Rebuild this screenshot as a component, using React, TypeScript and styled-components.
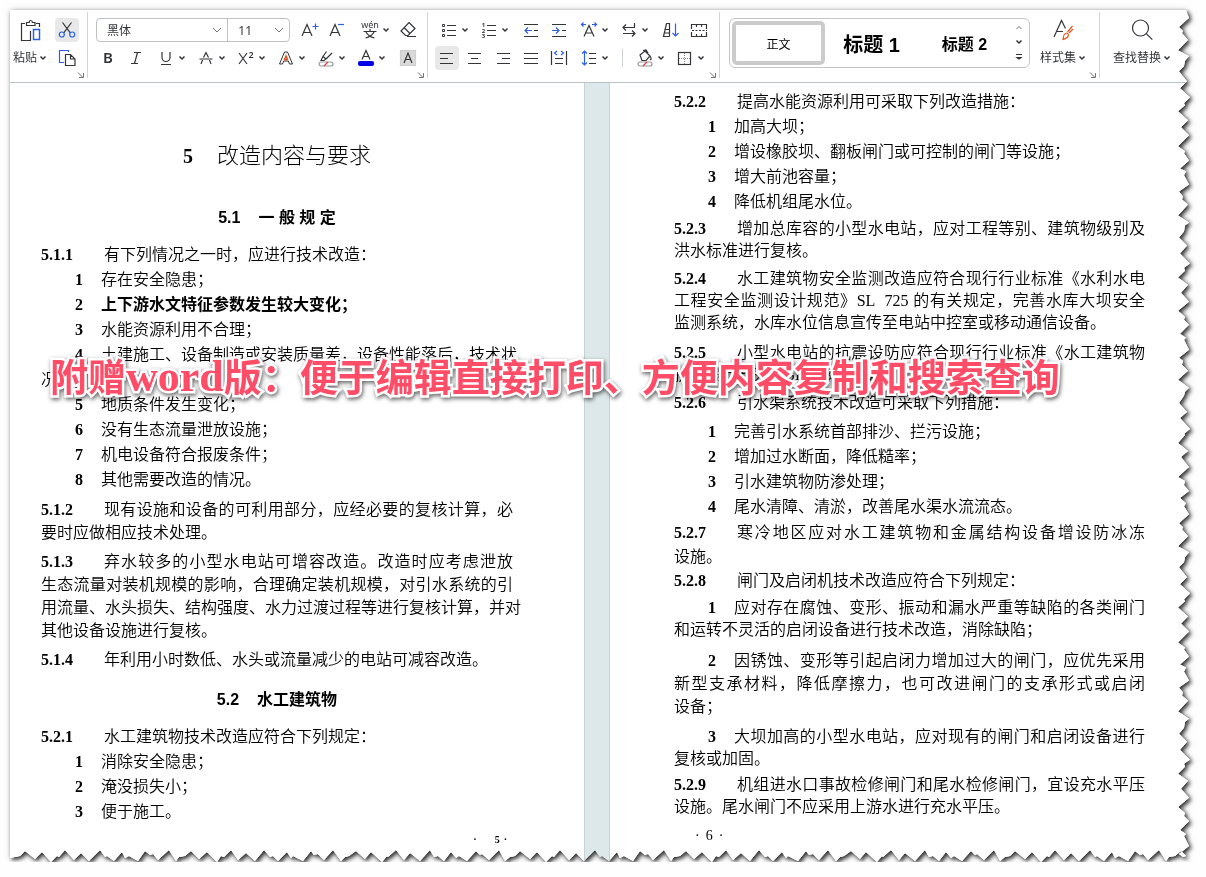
import React, { ReactNode } from "react";
import styled, { createGlobalStyle } from "styled-components";

const INK = "#333538";
const BLUE = "#2a5fe6";
const UI_FONT = '"Noto Sans", "Noto Sans CJK SC", sans-serif';
const BODY_FONT = '"Liberation Serif", "Noto Sans CJK SC", serif';

const GlobalStyle = createGlobalStyle`
  * { box-sizing: border-box; }
  body { margin: 0; background: #fefefe; color: #000; font-family: ${UI_FONT}; }
  button, select { font: inherit; color: inherit; }
`;

/* ---------- torn paper outline ---------- */

const TEETH: [number, number][] = [
  [9, 1], [8, 11], [4, 7], [3, 8], [6, 2], [10, 12], [7, 1], [4, 5], [5, 6], [6, 11],
  [9, 3], [7, 10], [10, 0], [5, 6], [2, 5], [7, 12], [8, 2], [7, 9], [9, 1], [10, 12],
  [5, 5], [3, 6], [6, 1], [8, 10], [4, 4], [3, 6],
];

function tornEdge(total: number, shift: number) {
  const points: [number, number][] = [];
  let at = 0;
  for (let i = shift; at < total; i++) {
    const [step, depth] = TEETH[i % TEETH.length];
    at += step + ((i * 5) % 3) - 1;
    points.push([Math.min(100, (at / total) * 100), depth]);
  }
  return points;
}

const rightEdge = tornEdge(850, 0)
  .slice(0, -2)
  .map(([p, d]) => `calc(100% - ${d}px) ${p.toFixed(2)}%`);
const bottomEdge = tornEdge(1180, 7)
  .slice(0, -1)
  .reverse()
  .map(([p, d]) => `${p.toFixed(2)}% calc(100% - ${d}px)`);
const TORN_CLIP = `polygon(0 0, calc(100% - 4px) 0, ${rightEdge.join(", ")}, calc(100% - 4px) calc(100% - 6px), ${bottomEdge.join(", ")}, 0 calc(100% - 4px))`;

const Sheet = styled.main`
  position: relative;
  margin: 10px 16px 0 10px;
  filter: drop-shadow(2px 2px 2px rgba(0, 0, 0, 0.8)) drop-shadow(0 0 3px rgba(0, 0, 0, 0.18));
`;
const Torn = styled.div`
  background: #fff;
  clip-path: ${TORN_CLIP};
`;

/* ---------- ribbon ---------- */

const Ribbon = styled.header`
  display: flex;
  height: 73px;
  border-bottom: 1px solid #b7c3c5;
  background: #fff;
  overflow: hidden;
  color: ${INK};
`;
const Group = styled.div<{ $pad: string }>`
  position: relative;
  display: flex;
  flex: none;
  padding: ${(p) => p.$pad};
  &::after {
    content: "";
    position: absolute;
    right: 0;
    top: 2px;
    height: 66px;
    border-right: 1px solid #d2d5d7;
  }
`;
const Rows = styled.div`
  display: flex;
  flex-direction: column;
  gap: 4px;
`;
const Row = styled.div`
  display: flex;
  gap: 4px;
  height: 24px;
`;
const Cluster = styled.div`
  display: flex;
`;
const Tool = styled.button<{ $on?: boolean; $menu?: boolean }>`
  display: flex;
  align-items: center;
  justify-content: ${(p) => (p.$menu ? "flex-start" : "center")};
  width: ${(p) => (p.$menu ? 40 : p.$on ? 24 : 28)}px;
  height: 24px;
  margin: 0 ${(p) => (p.$on ? 2 : 0)}px;
  padding: ${(p) => (p.$menu ? "0 0 0 4px" : "0")};
  border: 0;
  border-radius: 4px;
  background: ${(p) => (p.$on ? "#e8e8e8" : "transparent")};
`;
const Launcher = styled.button`
  position: absolute;
  right: 3px;
  bottom: 3px;
  width: 8px;
  height: 8px;
  padding: 0;
  border: 0;
  background: none;
  display: flex;
`;
const PasteColumn = styled.div`
  display: flex;
  flex-direction: column;
  width: 40px;
  gap: 4px;
`;
const PasteButton = styled(Tool)`
  width: 36px;
`;
const CaptionButton = styled.button`
  display: flex;
  align-items: center;
  gap: 2px;
  height: 24px;
  padding: 0;
  border: 0;
  background: none;
  font-size: 12px;
  line-height: 20px;
  white-space: nowrap;
`;
const Combos = styled.div`
  display: flex;
  width: 194px;
  height: 24px;
  margin-left: 2px;
  border: 1px solid #bfc2c4;
  border-radius: 4px;
`;
const Combo = styled.label<{ $w: number; $line?: boolean }>`
  display: flex;
  align-items: center;
  width: ${(p) => p.$w}px;
  padding-right: 5px;
  border-left: ${(p) => (p.$line ? "1px solid #bfc2c4" : "0")};
  select {
    flex: 1;
    min-width: 0;
    padding: 0 0 0 10px;
    border: 0;
    background: none;
    appearance: none;
    font-size: 12px;
  }
`;
const Divider = styled.span`
  width: 1px;
  height: 18px;
  margin: 3px 6px 0 9px;
  background: #cfd2d4;
`;
const Gallery = styled.div`
  display: flex;
  width: 301px;
  height: 50px;
  padding: 2px;
  border: 1px solid #c3c6c8;
  border-radius: 6px;
`;
const StyleTile = styled.button<{ $size: number; $bold?: boolean; $on?: boolean }>`
  flex: 1;
  height: 44px;
  padding: 0;
  border: 4px solid ${(p) => (p.$on ? "#cbcbcb" : "transparent")};
  border-radius: 5px;
  background: none;
  color: #000;
  font-family: "Liberation Sans", "Noto Sans CJK SC", sans-serif;
  font-size: ${(p) => p.$size}px;
  font-weight: ${(p) => (p.$bold ? 700 : 400)};
  white-space: nowrap;
`;
const Scroller = styled.div`
  display: flex;
  flex-direction: column;
  justify-content: space-around;
  align-items: center;
  width: 16px;
  button { padding: 0; border: 0; background: none; display: flex; }
`;
const BigTool = styled.div`
  display: flex;
  flex-direction: column;
  align-items: center;
  gap: 4px;
`;
const StyleSetTool = styled(BigTool)`
  padding-left: 10px;
`;
const SearchTool = styled(BigTool)`
  flex: none;
  padding: 8px 0 0 13px;
`;

const Svg = styled.svg`
  display: block;
  flex: none;
  fill: none;
  stroke: ${INK};
  stroke-width: 1.2;
  overflow: visible;
  .b { stroke: ${BLUE}; }
  .o { stroke: #e0591f; }
  text { fill: ${INK}; stroke: none; font-family: "Noto Sans", "Noto Sans CJK SC", sans-serif; text-anchor: middle; }
`;
const Icon = ({ children }: { children: ReactNode }) => (
  <Svg width="24" height="24" viewBox="0 0 24 24" aria-hidden="true">{children}</Svg>
);
const Chevron = () => (
  <Svg width="8" height="6" viewBox="0 0 8 6" aria-hidden="true"><path d="M1.5 1.5L4 4l2.5-2.5" strokeWidth="1.5" /></Svg>
);
const WideChevron = () => (
  <Svg width="10" height="8" viewBox="0 0 10 8" aria-hidden="true"><path d="M1 2l4 4 4-4" stroke="#777" strokeWidth="1" /></Svg>
);
const Corner = () => (
  <Launcher aria-label="更多设置">
    <Svg width="8" height="8" viewBox="0 0 8 8" aria-hidden="true"><path d="M1 1.5l4.5 4.5M6.500 2v4.500H2" stroke="#777" strokeWidth="1" /></Svg>
  </Launcher>
);

function T({ name, menu, on, children }: { name: string; menu?: boolean; on?: boolean; children: ReactNode }) {
  return (
    <Tool aria-label={name} $menu={menu} $on={on}>
      <Icon>{children}</Icon>
      {menu && <Chevron />}
    </Tool>
  );
}

const lines = (rows: [number, number, number][]) => <path d={rows.map(([y, a, b]) => `M${a} ${y}H${b}`).join("")} />;

function Toolbar() {
  return (
    <Ribbon>
      <Group $pad="8px 7px 0 3px">
        <PasteColumn>
          <PasteButton aria-label="粘贴板">
            <Icon>
              <path d="M6 5.500H2.500v17H12M17 5.500h3.500V9" />
              <path d="M7.500 7.500v-3h2.700c0-1.400.8-2 1.600-2s1.600.6 1.600 2H16v3z" />
              <path className="b" d="M14.500 11.500h6v10h-6z" strokeWidth="1.500" />
              <path d="M11.500 13v9.500" />
            </Icon>
          </PasteButton>
          <CaptionButton>粘贴<Chevron /></CaptionButton>
        </PasteColumn>
        <Rows>
          <Tool aria-label="剪切" $on>
            <Icon>
              <path d="M7.500 4.500l7.800 10.300M16.500 4.500L8.700 14.800" />
              <circle className="b" cx="6.800" cy="16.500" r="2.500" />
              <circle className="b" cx="17.200" cy="16.500" r="2.500" />
            </Icon>
          </Tool>
          <T name="复制">
            <path className="b" d="M9 16.500H4.500v-12h9V6" />
            <path d="M10.500 8.500h5l4.500 4.500v6.500h-9.500zM15.500 8.500V13H20" />
          </T>
        </Rows>
        <Corner />
      </Group>

      <Group $pad="8px 6px 0 6px">
        <Rows>
          <Row>
            <Combos>
              <Combo $w={131}>
                <select aria-label="字体" defaultValue="黑体"><option>黑体</option></select>
                <WideChevron />
              </Combo>
              <Combo $w={62} $line>
                <select aria-label="字号" defaultValue="11"><option>11</option></select>
                <WideChevron />
              </Combo>
            </Combos>
            <Cluster>
              <T name="增大字号">
                <path d="M6 18L11 6.500 16 18M7.600 14.500h6.800" />
                <path className="b" d="M16.500 8.500h6M19.500 5.500v6" />
              </T>
              <T name="减小字号">
                <path d="M6 18L11 6.500 16 18M7.600 14.500h6.800" />
                <path className="b" d="M14 6.500h6" />
              </T>
            </Cluster>
            <Cluster>
              <T name="拼音指南" menu>
                <text x="12" y="10" fontSize="9">wén</text>
                <path d="M5.500 13.500h13M12 11v2.500M8 14c1.500 3 4 5 8.500 6M16 14c-1.500 3-4 5-8.500 6" />
              </T>
              <T name="清除格式">
                <path d="M13 4.500l6 6-7 7H9.500L5 13zM8 9.500l6 6M11 18.500h9" />
              </T>
            </Cluster>
          </Row>
          <Row>
            <Cluster>
              <T name="加粗"><text x="12" y="17" fontSize="15" fontWeight="600">B</text></T>
              <T name="倾斜"><path d="M10 6.500h7M7 17.500h7M13.500 6.500l-3 11" /></T>
              <T name="下划线" menu><path d="M8 6v5.500a4 4 0 0 0 8 0V6M7 18.500h10" /></T>
              <T name="删除线" menu>
                <path d="M9.500 11.500L12 6.500l2.500 5M8.500 14L7 18M15.500 14l1.500 4M5.500 13h13" />
              </T>
              <T name="上标" menu>
                <path d="M5 7l8 11M13 7l-8 11" />
                <text x="17" y="12" fontSize="9" fontWeight="600">2</text>
              </T>
              <T name="文字效果" menu>
                <path d="M5.500 18L10.500 6h3l5 12h-3l-1.200-3H9.700l-1.200 3z" strokeWidth="1" />
                <path className="o" d="M12 10l-1.500 3.500h3z" strokeWidth="1.500" />
              </T>
              <T name="突出显示" menu>
                <path d="M7 14.500l2-4 3 2.500-2 1.500zM9 10.500l3.500-5M12 13l6-6" />
                <rect x="5" y="16" width="14" height="4" rx="2" stroke="#9a9a9a" />
                <path d="M10 20l4-4" stroke="#e0434b" />
              </T>
              <T name="字体颜色" menu>
                <path d="M8 13.500L12 4.500l4 9M9.400 10.500h5.200" />
                <rect x="4" y="15" width="16" height="5" rx="2" fill="#0000e6" stroke="none" />
              </T>
            </Cluster>
            <T name="字符底纹">
              <rect x="4.500" y="4.500" width="15" height="15" fill="#d9d9d9" stroke="#cfcfcf" />
              <path d="M8 17l4-10 4 10M9.300 13.500h5.400" />
            </T>
          </Row>
        </Rows>
        <Corner />
      </Group>

      <Group $pad="8px 7px 0 5px">
        <Rows>
          <Row>
            <Cluster>
              <T name="项目符号" menu>
                {lines([[7.5, 10, 19], [12.5, 10, 19], [17.5, 10, 19]])}
                <path d="M5.500 6.500h2v2h-2zM5.500 11.500h2v2h-2zM5.500 16.500h2v2h-2z" strokeWidth="1" />
              </T>
              <T name="编号" menu>
                {lines([[7.5, 10, 19], [12.5, 10, 19], [17.5, 10, 19]])}
                <text x="6.500" y="9" fontSize="6" fontWeight="700">1</text>
                <text x="6.500" y="14.500" fontSize="6" fontWeight="700">2</text>
                <text x="6.500" y="20" fontSize="6" fontWeight="700">3</text>
              </T>
            </Cluster>
            <Cluster>
              <T name="减少缩进">
                {lines([[6.5, 5, 19], [12.5, 15, 19], [18.5, 5, 19]])}
                <path className="b" d="M13 12.500H6M9 9.500l-3 3 3 3" />
              </T>
              <T name="增加缩进">
                {lines([[6.5, 5, 19], [12.5, 15, 19], [18.5, 5, 19]])}
                <path className="b" d="M5 12.500h7M9 9.500l3 3-3 3" />
              </T>
              <T name="字符缩放" menu>
                <path d="M7 18.500L12 7.500l5 11M8.600 15h6.800" />
                <path className="b" d="M4.500 6.500H9M15 6.500h4.500M6.500 4.500l-2 2 2 2M17.500 4.500l2 2-2 2" />
              </T>
              <T name="文字方向" menu>
                <path d="M17.500 5v4.500H6M9 6.500l-3 3 3 3M6 15.500h12M15 12.500l3 3-3 3" />
              </T>
            </Cluster>
            <Cluster>
              <T name="排序">
                <path d="M7.500 5.500h3v13M7.500 5.500l-3 13h6M6.500 11.500h4M5.500 15h5" />
                <path className="b" d="M16.500 5.500v12.500M13.500 15l3 3 3-3" />
              </T>
              <T name="制表位">
                <path d="M4.500 11V6.500h15V11M4.500 14v4.500h15V14M9.500 6.500V9M14.500 6.500V9M9.500 16v2.500M14.500 16v2.500" />
                <path d="M5 12.500h15" strokeDasharray="2 1.500" />
              </T>
            </Cluster>
          </Row>
          <Row>
            <Cluster>
              <T name="左对齐" on>{lines([[7.5, 5, 18], [12.5, 5, 13], [17.5, 5, 18]])}</T>
              <T name="居中">{lines([[7.5, 5, 18], [12.5, 8, 15], [17.5, 5, 18]])}</T>
              <T name="右对齐">{lines([[7.5, 6, 19], [12.5, 11, 19], [17.5, 6, 19]])}</T>
              <T name="两端对齐">{lines([[7.5, 5, 19], [12.5, 5, 19], [17.5, 5, 19]])}</T>
              <T name="分散对齐">
                {lines([[12.5, 8, 16], [17.5, 8, 16]])}
                <path d="M4.500 5v14M19.500 5v14" />
                <path className="b" d="M10 5L7.500 7l2.500 2M14 5l2.500 2-2.500 2" />
              </T>
              <T name="行距" menu>
                {lines([[7.5, 12, 19], [12.5, 12, 19], [17.5, 12, 19]])}
                <path className="b" d="M7.500 5v14M5 7.500L7.500 5 10 7.500M5 16.500L7.500 19l2.500-2.500" />
              </T>
              <Divider />
              <T name="底纹颜色" menu>
                <path d="M7 9l5-4 5 5-4 4.500H9zM10 4.500l3-.5 2 3M17 10c1.500 2 1.500 3 0 4" />
                <rect x="5" y="16" width="14" height="4" rx="2" stroke="#9a9a9a" />
                <path d="M10 20l4-4" stroke="#e0434b" />
              </T>
              <T name="边框" menu>
                <rect x="5.500" y="6.500" width="12" height="12" />
                <path d="M11.500 7v11M6 12.500h11" stroke="#888" strokeWidth="1" strokeDasharray="1 1" />
              </T>
            </Cluster>
          </Row>
        </Rows>
        <Corner />
      </Group>

      <Group $pad="8px 14px 0 9px">
        <Gallery>
          <StyleTile $size={12} $on>正文</StyleTile>
          <StyleTile $size={20} $bold>标题 1</StyleTile>
          <StyleTile $size={16} $bold>标题 2</StyleTile>
          <Scroller>
            <button aria-label="上一行"><Svg width="8" height="6" viewBox="0 0 8 6"><path d="M1.500 4L4 1.500 6.500 4" stroke="#aaa" /></Svg></button>
            <button aria-label="下一行"><Chevron /></button>
            <button aria-label="全部样式"><Svg width="8" height="8" viewBox="0 0 8 8"><path d="M1 1.500h6M2 4.500h4L4 6z" /></Svg></button>
          </Scroller>
        </Gallery>
        <StyleSetTool>
          <Icon>
            <path d="M3 19L10.500 2.500l4 8M6 13.500h6" />
            <path className="o" d="M21.500 8l-5 6M22 11l-4 4M12 21.500c.3-4 1.500-6.500 4-6.500 2.500 1 2 5-4 6.500z" />
          </Icon>
          <CaptionButton>样式集<Chevron /></CaptionButton>
        </StyleSetTool>
        <Corner />
      </Group>

      <SearchTool>
        <Icon>
          <circle cx="10.500" cy="10" r="8" />
          <path d="M16.300 15.700l6 6" />
        </Icon>
        <CaptionButton>查找替换<Chevron /></CaptionButton>
      </SearchTool>
    </Ribbon>
  );
}

/* ---------- document ---------- */

const Spread = styled.div`
  display: flex;
  background: #dce8ea;
  font-family: ${BODY_FONT};
  font-size: 16px;
`;
const Page = styled.article<{ $side: "left" | "right" }>`
  flex: 1 1 ${(p) => (p.$side === "left" ? 575 : 581)}px;
  min-width: 0;
  background: #fff;
  padding: ${(p) => (p.$side === "left" ? "57px 71px 14px 31px" : "6px 45px 12px 64px")};
  border-right: ${(p) => (p.$side === "left" ? "1px solid #c6d2d4" : "0")};
  border-left: ${(p) => (p.$side === "right" ? "1px solid #c6d2d4" : "0")};
`;
const Gutter = styled.div`
  flex: none;
  width: 24px;
`;
const Chapter = styled.h1`
  display: flex;
  justify-content: center;
  gap: 24px;
  margin: 0;
  font-size: 22px;
  line-height: 32px;
  font-weight: 300;
  b { font-weight: 700; font-size: 20px; }
`;
const Section = styled.h2<{ $top: number }>`
  display: flex;
  justify-content: center;
  gap: 18px;
  margin: ${(p) => p.$top}px 0 12px;
  font-family: "Liberation Sans", "Noto Sans CJK SC", sans-serif;
  font-size: 16px;
  line-height: 24px;
  font-weight: 700;
`;
const Para = styled.div<{ $top: number; $lh: number; $bold?: boolean }>`
  margin-top: ${(p) => p.$top}px;
  line-height: ${(p) => p.$lh}px;
  font-weight: ${(p) => (p.$bold ? 700 : 350)};
`;
const Line = styled.div<{ $indent: boolean }>`
  display: flex;
  padding-left: ${(p) => (p.$indent ? 34 : 0)}px;
  white-space: nowrap;
`;
const Num = styled.b<{ $w: number }>`
  flex: none;
  width: ${(p) => p.$w}px;
  font-weight: 700;
`;
const Words = styled.span<{ $fill: boolean }>`
  flex: 1;
  min-width: 0;
  text-align-last: ${(p) => (p.$fill ? "justify" : "left")};
`;
const Folio = styled.footer<{ $side: "left" | "right" }>`
  display: flex;
  gap: ${(p) => (p.$side === "left" ? 4 : 6)}px;
  justify-content: ${(p) => (p.$side === "left" ? "flex-end" : "flex-start")};
  margin-top: ${(p) => (p.$side === "left" ? 8 : 10)}px;
  padding: ${(p) => (p.$side === "left" ? "0 6px 0 0" : "0 0 0 21px")};
  font-size: ${(p) => (p.$side === "left" ? 10 : 14)}px;
  font-weight: ${(p) => (p.$side === "left" ? 700 : 400)};
  line-height: 16px;
  span:first-child { margin-right: ${(p) => (p.$side === "left" ? 14 : 0)}px; }
`;
const Banner = styled.p`
  position: absolute;
  left: 40px;
  top: 337px;
  margin: 0;
  white-space: nowrap;
  font-family: "Noto Sans CJK SC", sans-serif;
  font-size: 38px;
  line-height: 56px;
  font-weight: 700;
  color: #ff4d68;
  -webkit-text-stroke: 5px #fff;
  paint-order: stroke fill;
  filter: drop-shadow(1px 2px 2px rgba(0, 0, 0, 0.6));
  span { font-family: "Liberation Serif", serif; font-size: 44px; }
`;

interface Block { n: string; t: string[]; top?: number; lh?: number; bold?: boolean }

function Blocks({ items }: { items: Block[] }) {
  return (
    <>
      {items.map((b, k) => {
        const clause = b.n.includes(".");
        return (
          <Para key={k} $top={b.top ?? 0} $lh={b.lh ?? 25} $bold={b.bold}>
            {b.t.map((text, i) => (
              <Line key={i} $indent={!clause && i === 0}>
                {i === 0 && <Num $w={clause ? 63 : 26}>{b.n}</Num>}
                <Words $fill={i < b.t.length - 1}>{text}</Words>
              </Line>
            ))}
          </Para>
        );
      })}
    </>
  );
}

const general: Block[] = [
  { n: "5.1.1", t: ["有下列情况之一时，应进行技术改造："] },
  { n: "1", t: ["存在安全隐患；"] },
  { n: "2", t: ["上下游水文特征参数发生较大变化；"], bold: true },
  { n: "3", t: ["水能资源利用不合理；"] },
  { n: "4", t: ["土建施工、设备制造或安装质量差，设备性能落后，技术状", "况差；"] },
  { n: "5", t: ["地质条件发生变化；"] },
  { n: "6", t: ["没有生态流量泄放设施；"] },
  { n: "7", t: ["机电设备符合报废条件；"] },
  { n: "8", t: ["其他需要改造的情况。"] },
  { n: "5.1.2", t: ["现有设施和设备的可利用部分，应经必要的复核计算，必", "要时应做相应技术处理。"], top: 6, lh: 23 },
  {
    n: "5.1.3",
    t: ["弃水较多的小型水电站可增容改造。改造时应考虑泄放", "生态流量对装机规模的影响，合理确定装机规模，对引水系统的引", "用流量、水头损失、结构强度、水力过渡过程等进行复核计算，并对", "其他设备设施进行复核。"],
    top: 6,
    lh: 23,
  },
  { n: "5.1.4", t: ["年利用小时数低、水头或流量减少的电站可减容改造。"], top: 6, lh: 23 },
];
const hydraulic: Block[] = [
  { n: "5.2.1", t: ["水工建筑物技术改造应符合下列规定："] },
  { n: "1", t: ["消除安全隐患；"] },
  { n: "2", t: ["淹没损失小；"] },
  { n: "3", t: ["便于施工。"] },
];
const facing: Block[] = [
  { n: "5.2.2", t: ["提高水能资源利用可采取下列改造措施："] },
  { n: "1", t: ["加高大坝；"] },
  { n: "2", t: ["增设橡胶坝、翻板闸门或可控制的闸门等设施；"] },
  { n: "3", t: ["增大前池容量；"] },
  { n: "4", t: ["降低机组尾水位。"] },
  { n: "5.2.3", t: ["增加总库容的小型水电站，应对工程等别、建筑物级别及", "洪水标准进行复核。"], top: 4, lh: 22 },
  {
    n: "5.2.4",
    t: ["水工建筑物安全监测改造应符合现行行业标准《水利水电", "工程安全监测设计规范》SL\u00a0\u00a0725 的有关规定，完善水库大坝安全", "监测系统，水库水位信息宣传至电站中控室或移动通信设备。"],
    top: 6,
    lh: 22,
  },
  { n: "5.2.5", t: ["小型水电站的抗震设防应符合现行行业标准《水工建筑物", "抗震设计规范》SL 203 的规定。"], top: 8, lh: 22 },
  { n: "5.2.6", t: ["引水渠系统技术改造可采取下列措施："], top: 4 },
  { n: "1", t: ["完善引水系统首部排沙、拦污设施；"], top: 4 },
  { n: "2", t: ["增加过水断面，降低糙率；"] },
  { n: "3", t: ["引水建筑物防渗处理；"] },
  { n: "4", t: ["尾水清障、清淤，改善尾水渠水流流态。"] },
  { n: "5.2.7", t: ["寒冷地区应对水工建筑物和金属结构设备增设防冰冻", "设施。"], top: 2, lh: 24 },
  { n: "5.2.8", t: ["闸门及启闭机技术改造应符合下列规定："], lh: 24 },
  { n: "1", t: ["应对存在腐蚀、变形、振动和漏水严重等缺陷的各类闸门", "和运转不灵活的启闭设备进行技术改造，消除缺陷；"], top: 4, lh: 22 },
  { n: "2", t: ["因锈蚀、变形等引起启闭力增加过大的闸门，应优先采用", "新型支承材料，降低摩擦力，也可改进闸门的支承形式或启闭", "设备；"], top: 8, lh: 23 },
  { n: "3", t: ["大坝加高的小型水电站，应对现有的闸门和启闭设备进行", "复核或加固。"], top: 8, lh: 22 },
  { n: "5.2.9", t: ["机组进水口事故检修闸门和尾水检修闸门，宜设充水平压", "设施。尾水闸门不应采用上游水进行充水平压。"], top: 4, lh: 22 },
];

export default function App() {
  return (
    <>
      <GlobalStyle />
      <Sheet>
        <Torn>
          <Toolbar />
          <Spread>
            <Page $side="left">
              <Chapter><b>5</b><span>改造内容与要求</span></Chapter>
              <Section $top={34}><span>5.1</span><span>一 般 规 定</span></Section>
              <Blocks items={general} />
              <Section $top={17}><span>5.2</span><span>水工建筑物</span></Section>
              <Blocks items={hydraulic} />
              <Folio $side="left"><span>·</span><span>5</span><span>·</span></Folio>
            </Page>
            <Gutter />
            <Page $side="right">
              <Blocks items={facing} />
              <Folio $side="right"><span>·</span><span>6</span><span>·</span></Folio>
            </Page>
          </Spread>
        </Torn>
        <Banner>附赠<span>word</span>版：便于编辑直接打印、方便内容复制和搜索查询</Banner>
      </Sheet>
    </>
  );
}
